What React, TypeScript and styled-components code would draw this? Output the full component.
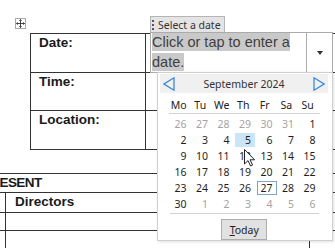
import React from 'react';
import styled, { createGlobalStyle } from 'styled-components';

const GlobalStyle = createGlobalStyle`
  *, *::before, *::after { box-sizing: border-box; }
  html, body { margin: 0; padding: 0; background: #fff; }
  body { width: 335px; height: 248px; overflow: hidden; }
`;

const Page = styled.div`
  position: relative;
  width: 335px;
  height: 248px;
  overflow: hidden;
  padding-top: 33px;
  font-family: 'Liberation Sans', Arial, sans-serif;
  color: #1a1a1a;
`;

const TopTable = styled.div`
  position: relative;
  margin-left: 30px;
  width: 330px;
  border-top: 1px solid #333;
  border-left: 1px solid #333;
`;

const BottomTable = styled.div`
  margin-top: 23px;
  margin-left: -35px;
  width: 390px;
  border-top: 1px solid #333;
`;

const Row = styled.div<{ $h: number }>`
  display: flex;
  height: ${(p) => p.$h}px;
  border-bottom: 1px solid #333;
`;

const LabelCell = styled.div`
  width: 115px;
  flex: none;
  padding: 1px 0 0 8px;
  border-right: 1px solid #333;
  font-weight: bold;
  font-size: 13.5px;
  line-height: 16px;
`;

const ValueCell = styled.div`
  flex: 1;
  padding-left: 4px;
`;

const Cell = styled.div<{ $w?: number; $pad?: number; $line?: boolean; $tight?: boolean }>`
  ${(p) => (p.$w ? `width: ${p.$w}px; flex: none;` : 'flex: 1;')}
  padding: 1px 0 0 ${(p) => p.$pad ?? 0}px;
  border-right: ${(p) => (p.$line ? '1px solid #333' : 'none')};
  font-weight: bold;
  font-size: 13.5px;
  line-height: 16px;
  letter-spacing: ${(p) => (p.$tight ? '-0.6px' : 'normal')};
  white-space: nowrap;
`;

const MoveHandle = styled.div`
  position: absolute;
  left: -16px;
  top: -16px;
  width: 11px;
  height: 11px;
  border: 1px solid #a9a9a9;
  background: #fff;
  display: flex;
  align-items: center;
  justify-content: center;
`;

const DateControl = styled.div`
  display: flex;
  flex-direction: column;
  align-items: flex-start;
  width: 183px;
  margin-top: -18px;
`;

const Tab = styled.div`
  display: flex;
  align-items: center;
  gap: 4px;
  height: 16px;
  padding: 0 3px 0 1px;
  border: 1px solid #b5b5b5;
  border-bottom: none;
  background: #e4e4e4;
  font-family: 'Noto Sans', sans-serif;
  font-size: 10.5px;
  color: #333;
`;

const Grip = styled.span`
  width: 2px;
  height: 10px;
  border-left: 2px dotted #555;
`;

const Box = styled.div`
  position: relative;
  display: flex;
  width: 183px;
  height: 41px;
  border: 1px solid #ababab;
  background: #fff;
`;

const Placeholder = styled.div`
  flex: 1;
  margin-top: -1px;
  padding-left: 1px;
  font-size: 14.5px;
  line-height: 20px;
  color: #3f3f3f;
`;

const Shade = styled.span`
  background: #c9c9c9;
  padding: 1px 0;
  -webkit-box-decoration-break: clone;
  box-decoration-break: clone;
`;

const DropButton = styled.div`
  width: 26px;
  flex: none;
  border-left: 1px solid #ababab;
  display: flex;
  align-items: center;
  justify-content: center;

  &::after {
    content: '';
    border-left: 3.5px solid transparent;
    border-right: 3.5px solid transparent;
    border-top: 4px solid #333;
  }
`;

const Popup = styled.div`
  position: absolute;
  left: 6px;
  top: 100%;
  width: 176px;
  height: 169px;
  padding: 1px 4px 0 2px;
  border: 1px solid #cfcfcf;
  background: #fff;
  box-shadow: 1px 1px 3px rgba(0, 0, 0, 0.12);
  font-family: 'Noto Sans', sans-serif;
  font-size: 10.5px;
  z-index: 2;
`;

const Header = styled.div`
  display: flex;
  align-items: center;
  justify-content: space-between;
  height: 19px;
  padding: 0 3px;
  background: #f0f0f0;
  color: #333;
`;

const Grid = styled.div`
  margin-left: 9px;
  width: 150.5px;
`;

const Week = styled.div<{ $head?: boolean }>`
  display: grid;
  grid-template-columns: repeat(7, 21.5px);
  height: 16px;
  ${(p) =>
    p.$head
      ? 'margin: 4px 0 0; height: 17px; border-bottom: 1px solid #d2d2d2; margin-bottom: 2px;'
      : ''}
`;

const DayName = styled.div`
  text-align: center;
  line-height: 16px;
  color: #222;
  padding-right: 2px;
`;

const Day = styled.div`
  display: flex;
  justify-content: flex-end;
  align-items: center;
`;

const Num = styled.span<{ $muted?: boolean; $hover?: boolean; $today?: boolean }>`
  width: 20px;
  height: 14px;
  line-height: 12px;
  text-align: right;
  padding-right: 3px;
  color: ${(p) => (p.$muted ? '#a3a3a3' : '#1e1e1e')};
  background: ${(p) => (p.$hover ? '#cce4f7' : 'transparent')};
  border: 1px solid ${(p) => (p.$today ? '#7fa1cb' : 'transparent')};
`;

const Footer = styled.div`
  margin: 1px 1px 0;
  border-top: 1px solid #d2d2d2;
  display: flex;
  justify-content: center;
  padding-top: 5px;
`;

const TodayButton = styled.div`
  width: 46px;
  height: 21px;
  border: 1px solid #adadad;
  background: #e1e1e1;
  display: flex;
  align-items: center;
  justify-content: center;
  color: #1e1e1e;

  u { text-decoration: underline; text-underline-offset: 1px; }
`;

const Cursor = styled.svg`
  position: absolute;
  left: 86px;
  top: 76px;
`;

const Arrow = ({ dir }: { dir: 'left' | 'right' }) => (
  <svg width="12" height="14" viewBox="0 0 12 14">
    <polygon
      points={dir === 'left' ? '11,0.8 1,7 11,13.2' : '1,0.8 11,7 1,13.2'}
      fill="none"
      stroke="#3a8ad8"
      strokeWidth="1.3"
    />
  </svg>
);

type D = { n: number; muted?: boolean };

const weeks: D[][] = [
  [26, 27, 28, 29, 30, 31].map((n) => ({ n, muted: true })).concat([{ n: 1 }]),
  [2, 3, 4, 5, 6, 7, 8].map((n) => ({ n })),
  [9, 10, 11, 12, 13, 14, 15].map((n) => ({ n })),
  [16, 17, 18, 19, 20, 21, 22].map((n) => ({ n })),
  [23, 24, 25, 26, 27, 28, 29].map((n) => ({ n })),
  [{ n: 30 }].concat([1, 2, 3, 4, 5, 6].map((n) => ({ n, muted: true }))),
];

const dayNames = ['Mo', 'Tu', 'We', 'Th', 'Fr', 'Sa', 'Su'];

const Calendar = () => (
  <Popup>
    <Header>
      <Arrow dir="left" />
      <span>September 2024</span>
      <Arrow dir="right" />
    </Header>
    <Grid>
      <Week $head>
        {dayNames.map((d) => (
          <DayName key={d}>{d}</DayName>
        ))}
      </Week>
      {weeks.map((w, i) => (
        <Week key={i}>
          {w.map((d, j) => (
            <Day key={j}>
              <Num
                $muted={d.muted}
                $hover={!d.muted && d.n === 5}
                $today={!d.muted && d.n === 27}
              >
                {d.n}
              </Num>
            </Day>
          ))}
        </Week>
      ))}
      <Footer>
        <TodayButton>
          <span>
            <u>T</u>oday
          </span>
        </TodayButton>
      </Footer>
    </Grid>
    <Cursor width="12" height="18" viewBox="0 0 12 18">
      <path
        d="M0.5 0.5 L0.5 15 L4 11.6 L6.6 17 L8.6 16 L6 10.8 L10.6 10.8 Z"
        fill="#fff"
        stroke="#222"
        strokeWidth="1"
        strokeLinejoin="round"
      />
    </Cursor>
  </Popup>
);

const App: React.FC = () => (
  <>
    <GlobalStyle />
    <Page>
      <TopTable>
        <MoveHandle>
          <svg width="9" height="9" viewBox="0 0 9 9">
            <path
              d="M4.5 0.5 V8.5 M0.5 4.5 H8.5 M3.3 1.7 L4.5 0.5 L5.7 1.7 M3.3 7.3 L4.5 8.5 L5.7 7.3 M1.7 3.3 L0.5 4.5 L1.7 5.7 M7.3 3.3 L8.5 4.5 L7.3 5.7"
              fill="none"
              stroke="#333"
              strokeWidth="0.9"
            />
          </svg>
        </MoveHandle>
        <Row $h={39}>
          <LabelCell>Date:</LabelCell>
          <ValueCell>
            <DateControl>
              <Tab>
                <Grip />
                Select a date
              </Tab>
              <Box>
                <Placeholder>
                  <Shade>Click or tap to enter a date.</Shade>
                </Placeholder>
                <DropButton />
                <Calendar />
              </Box>
            </DateControl>
          </ValueCell>
        </Row>
        <Row $h={38}>
          <LabelCell>Time:</LabelCell>
          <ValueCell />
        </Row>
        <Row $h={39}>
          <LabelCell>Location:</LabelCell>
          <ValueCell />
        </Row>
      </TopTable>
      <BottomTable>
        <Row $h={19}>
          <Cell $pad={17} $tight>
            PRESENT
          </Cell>
        </Row>
        <Row $h={20}>
          <Cell $w={41} $line />
          <Cell $w={304} $pad={9} $line>
            Directors
          </Cell>
          <Cell />
        </Row>
        <Row $h={18}>
          <Cell $w={41} $line />
          <Cell $w={304} $line />
          <Cell />
        </Row>
        <Row $h={30}>
          <Cell $w={41} $line />
          <Cell $w={304} $line />
          <Cell />
        </Row>
      </BottomTable>
    </Page>
  </>
);

export default App;
